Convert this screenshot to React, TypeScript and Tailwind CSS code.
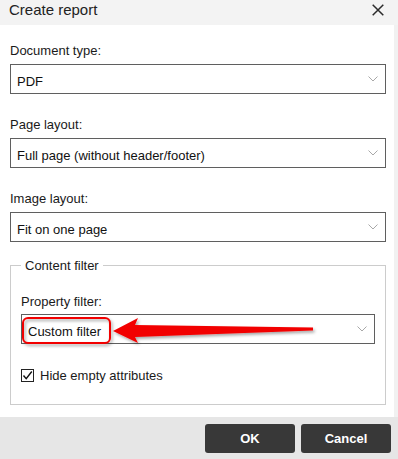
import type { ReactNode } from 'react'

function Chevron() {
  return (
    <svg width="10" height="6" viewBox="0 0 10 6" className="shrink-0">
      <path d="M0.5 0.5 L5 5 L9.5 0.5" fill="none" stroke="#a8a8a8" strokeWidth="1" />
    </svg>
  )
}

function Select({ value }: { value: string }) {
  return (
    <div className="h-[30px] border border-[#5f5f5f] bg-white flex items-center justify-between pl-[6px] pr-[7px]">
      <span className="pt-[4px] leading-[15px] text-[#111]">{value}</span>
      <Chevron />
    </div>
  )
}

function Field({ label, children, className = '' }: { label: string; children: ReactNode; className?: string }) {
  return (
    <div className={className}>
      <div className="leading-[15px] mb-[6px]">{label}</div>
      {children}
    </div>
  )
}

export default function App() {
  return (
    <div className="relative w-[398px] h-[459px] overflow-hidden flex flex-col bg-white text-[13px] text-[#1a1a1a] font-['Liberation_Sans',Arial,sans-serif]">
      {/* header */}
      <div className="h-[25px] shrink-0 bg-[#f3f3f3] flex items-start justify-between pl-[9px] pr-[14px] pt-[1px]">
        <span className="text-[15px] leading-[17px] text-[#222]">Create report</span>
        <svg width="12" height="12" viewBox="0 0 12 12" className="mt-[3px]">
          <path d="M0.7 0.7 L11.3 11.3 M11.3 0.7 L0.7 11.3" stroke="#2b2b2b" strokeWidth="1.5" />
        </svg>
      </div>

      {/* body */}
      <div className="flex flex-1">
        <div className="flex-1 pl-[10px] pr-[8px] pt-[18px]">
          <Field label="Document type:">
            <Select value="PDF" />
          </Field>
          <Field label="Page layout:" className="mt-[23px]">
            <Select value="Full page (without header/footer)" />
          </Field>
          <Field label="Image layout:" className="mt-[23px]">
            <Select value="Fit on one page" />
          </Field>

          <fieldset className="mt-[16px] min-w-0 border border-[#cccccc] px-[10px] pt-[21px] pb-[21px]">
            <legend className="px-[4px] leading-[15px]">Content filter</legend>
            <div className="leading-[15px] mb-[5px]">Property filter:</div>
            <Select value="Custom filter" />
            <div className="mt-[24px] flex items-center gap-[6px] leading-[15px]">
              <div className="w-[13px] h-[13px] border border-[#222] bg-white flex items-center justify-center">
                <svg width="11" height="11" viewBox="0 0 11 11">
                  <path d="M1.5 5.5 L4.2 8.6 L9.8 1.5" fill="none" stroke="#111" strokeWidth="1.4" />
                </svg>
              </div>
              <span>Hide empty attributes</span>
            </div>
          </fieldset>
        </div>
        <div className="w-[4px] bg-[#f1f1f1]" />
      </div>

      {/* footer */}
      <div className="h-[42px] shrink-0 bg-[#e6e6e6] flex justify-end items-start gap-[6px] pr-[7px] pt-[7px]">
        <button className="w-[90px] h-[29px] rounded-[3px] bg-[#383838] text-white font-bold text-[13px]">OK</button>
        <button className="w-[90px] h-[29px] rounded-[3px] bg-[#383838] text-white font-bold text-[13px]">Cancel</button>
      </div>

      {/* annotation overlay */}
      <svg className="absolute inset-0 pointer-events-none" width="398" height="459" viewBox="0 0 398 459">
        <defs>
          <filter id="sh" x="-10%" y="-50%" width="130%" height="250%">
            <feDropShadow dx="1.5" dy="2" stdDeviation="1.5" floodColor="#000" floodOpacity="0.35" />
          </filter>
        </defs>
        <rect x="23" y="318" width="87" height="25" rx="5" fill="none" stroke="#f20000" strokeWidth="2" filter="url(#sh)" />
        <polygon
          points="113,331 138,318 135,325 313,327.5 313,330.5 135,337 138,343"
          fill="#f20000"
          filter="url(#sh)"
        />
      </svg>
    </div>
  )
}
